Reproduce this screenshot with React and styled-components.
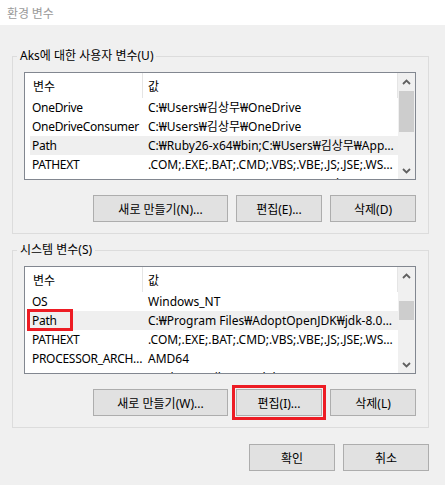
import React from "react";
import styled, { createGlobalStyle } from "styled-components";

const GlobalStyle = createGlobalStyle`
  html, body {
    margin: 0;
    padding: 0;
    background: #f0f0f0;
  }
  body {
    font-family: "Noto Sans", "Noto Sans CJK KR", sans-serif;
    font-size: 12px;
    color: #000;
  }
`;

const Window = styled.div`
  width: 445px;
  height: 485px;
  display: flex;
  flex-direction: column;
  background: #f0f0f0;
  overflow: hidden;
`;

const TitleBar = styled.div`
  height: 25px;
  flex: none;
  display: flex;
  align-items: center;
  padding-left: 7px;
  background: #fff;
  color: #9a9a9a;
  font-family: "Noto Sans CJK KR", sans-serif;
`;

const Body = styled.div`
  display: flex;
  flex-direction: column;
  padding: 31px 16px 0 12px;
`;

const Group = styled.div`
  position: relative;
  border: 1px solid #dcdcdc;
  padding: 15px 12px 11px 11px;
  margin-bottom: ${p => p.$mb || 0}px;
`;

const Legend = styled.span`
  position: absolute;
  top: -9px;
  left: 4px;
  padding: 0 3px;
  line-height: 16px;
  background: #f0f0f0;
`;

const ListBox = styled.div`
  display: flex;
  height: 108px;
  box-sizing: border-box;
  border: 1px solid #828790;
  background: #fff;
`;

const ListMain = styled.div`
  flex: 1;
  min-width: 0;
  display: flex;
  flex-direction: column;
  overflow: hidden;
`;

const Header = styled.div`
  flex: none;
  height: 25px;
  display: flex;
`;

const HeaderCell = styled.div`
  width: ${p => p.$w}px;
  box-sizing: border-box;
  padding-left: ${p => p.$pad}px;
  border-right: 1px solid #e5e5e5;
  display: flex;
  align-items: center;
`;

const Row = styled.div`
  position: relative;
  flex: none;
  height: 19px;
  margin-left: 5px;
  display: flex;
  align-items: center;
  background: ${p => (p.$selected ? "#efefef" : "transparent")};
`;

const Cell = styled.div`
  width: ${p => p.$w}px;
  box-sizing: border-box;
  padding-left: ${p => p.$pad}px;
  padding-right: ${p => p.$padR || 0}px;
  letter-spacing: ${p => p.$ls || 0}px;
  white-space: nowrap;
  overflow: hidden;
  text-overflow: ellipsis;
  line-height: 16px;
`;

const Mark = styled.span`
  position: absolute;
  left: -3px;
  top: -2px;
  width: 46px;
  height: 22px;
  box-sizing: border-box;
  border: 3px solid #ed1c24;
`;

const ScrollBar = styled.div`
  flex: none;
  width: 17px;
  display: flex;
  flex-direction: column;
  background: #f0f0f0;
`;

const Arrow = styled.div`
  height: 17px;
  display: flex;
  align-items: center;
  justify-content: center;
`;

const Track = styled.div`
  flex: 1;
  padding-top: ${p => p.$offset}px;
`;

const Thumb = styled.div`
  height: ${p => p.$h}px;
  margin: 0 1px;
  background: #cdcdcd;
`;

const ButtonRow = styled.div`
  display: flex;
  justify-content: flex-end;
  gap: 8px;
  margin-top: ${p => p.$mt || 0}px;
`;

const Button = styled.button`
  width: ${p => p.$w}px;
  height: 27px;
  padding: 0;
  border: 1px solid #adadad;
  background: #e1e1e1;
  color: #000;
  font: inherit;
  font-size: 12px;
  outline: ${p => (p.$marked ? "3px solid #ed1c24" : "none")};
  outline-offset: 1px;
`;

const Chevron = ({ down }) => (
  <svg width="9" height="6" viewBox="0 0 9 6">
    <path
      d={down ? "M1 1 L4.5 4.5 L8 1" : "M1 5 L4.5 1.5 L8 5"}
      fill="none"
      stroke="#606060"
      strokeWidth="1.8"
    />
  </svg>
);

const VarList = ({ rows, thumbOffset, thumbHeight }) => (
  <ListBox>
    <ListMain>
      <Header>
        <HeaderCell $w={118} $pad={8}>변수</HeaderCell>
        <HeaderCell $w={255} $pad={5}>값</HeaderCell>
      </Header>
      {rows.map(r => (
        <Row key={r.name} $selected={r.selected}>
          <Cell $w={113} $pad={2} $ls={-0.3}>{r.name}</Cell>
          <Cell $w={255} $pad={5} $padR={4}>{r.value}</Cell>
          {r.marked && <Mark />}
        </Row>
      ))}
    </ListMain>
    <ScrollBar>
      <Arrow><Chevron /></Arrow>
      <Track $offset={thumbOffset}>
        <Thumb $h={thumbHeight} />
      </Track>
      <Arrow><Chevron down /></Arrow>
    </ScrollBar>
  </ListBox>
);

const userRows = [
  { name: "OneDrive", value: "C:₩Users₩김상무₩OneDrive" },
  { name: "OneDriveConsumer", value: "C:₩Users₩김상무₩OneDrive" },
  { name: "Path", value: "C:₩Ruby26-x64₩bin;C:₩Users₩김상무₩AppData₩Local", selected: true },
  { name: "PATHEXT", value: ".COM;.EXE;.BAT;.CMD;.VBS;.VBE;.JS;.JSE;.WSF;.WSH;.MSC" },
  { name: "TEMP", value: "%USERPROFILE%₩AppData₩Local₩Temp" }
];

const systemRows = [
  { name: "OS", value: "Windows_NT" },
  { name: "Path", value: "C:₩Program Files₩AdoptOpenJDK₩jdk-8.0.252.09-hotspot₩bin", selected: true, marked: true },
  { name: "PATHEXT", value: ".COM;.EXE;.BAT;.CMD;.VBS;.VBE;.JS;.JSE;.WSF;.WSH;.MSC" },
  { name: "PROCESSOR_ARCHITECTURE", value: "AMD64" },
  { name: "PROCESSOR_IDENTIFIER", value: "Intel64 Family 6 Model 158" }
];

export default function App() {
  return (
    <>
      <GlobalStyle />
      <Window>
        <TitleBar>환경 변수</TitleBar>
        <Body>
          <Group $mb={16}>
            <Legend>Aks에 대한 사용자 변수(U)</Legend>
            <VarList rows={userRows} thumbOffset={1} thumbHeight={41} />
            <ButtonRow $mt={15}>
              <Button $w={135}>새로 만들기(N)...</Button>
              <Button $w={86}>편집(E)...</Button>
              <Button $w={86}>삭제(D)</Button>
            </ButtonRow>
          </Group>
          <Group>
            <Legend>시스템 변수(S)</Legend>
            <VarList rows={systemRows} thumbOffset={17} thumbHeight={19} />
            <ButtonRow $mt={15}>
              <Button $w={135}>새로 만들기(W)...</Button>
              <Button $w={86} $marked>편집(I)...</Button>
              <Button $w={86}>삭제(L)</Button>
            </ButtonRow>
          </Group>
          <ButtonRow $mt={16}>
            <Button $w={86}>확인</Button>
            <Button $w={86}>취소</Button>
          </ButtonRow>
        </Body>
      </Window>
    </>
  );
}
